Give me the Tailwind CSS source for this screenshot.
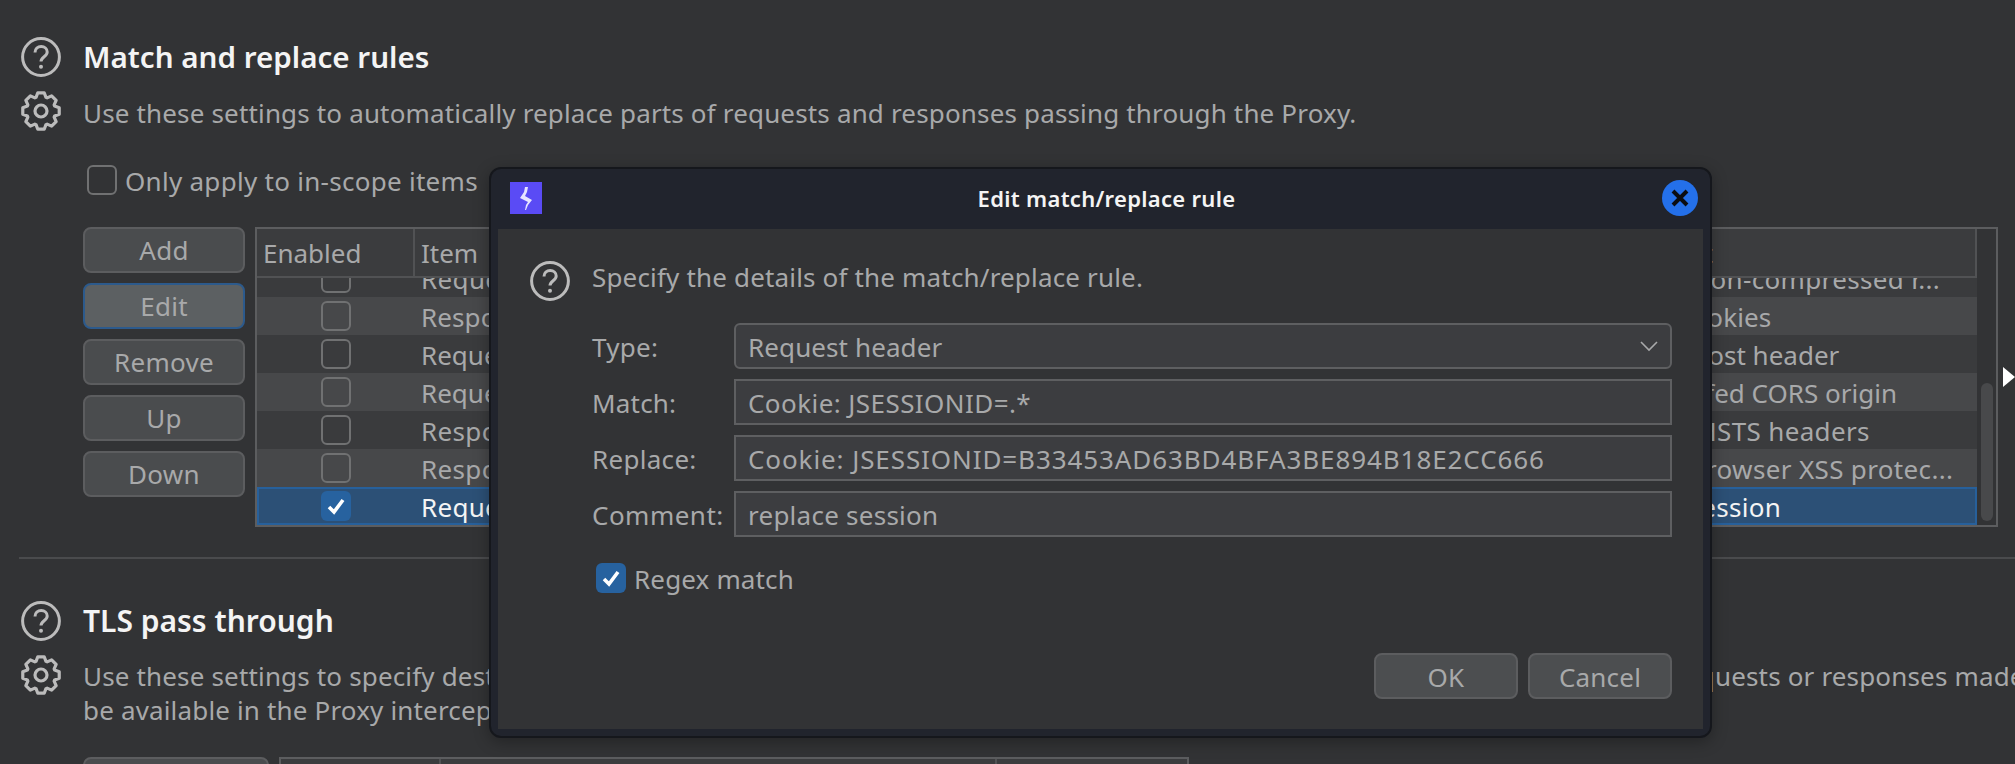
<!DOCTYPE html>
<html lang="en">
<head>
<meta charset="UTF-8">
<title>Match and replace rules</title>
<script src="https://cdn.jsdelivr.net/npm/@tailwindcss/browser@4"></script>
</head>
<body class="bg-[#323335] font-['Noto_Sans',sans-serif] text-[#a8a9aa] text-[26px] leading-[34px]">
<svg class="hidden">
	<symbol id="help" viewBox="0 0 40 40">
		<circle cx="20" cy="20" r="18.4" fill="none" stroke="#bcbcbc" stroke-width="3"/>
		<path d="M14 15.5c0-3.6 2.8-6 6.2-6s6 2.2 6 5.4c0 4.8-6.2 4.8-6.2 9.6" fill="none" stroke="#bcbcbc" stroke-width="3"/>
		<circle cx="20" cy="29.8" r="2" fill="#bcbcbc"/>
	</symbol>
	<symbol id="gear" viewBox="-21 -21 42 42">
		<polygon points="-4.96,-13.63 -3.21,-18.22 3.21,-18.22 4.96,-13.63 6.13,-13.14 10.61,-15.15 15.15,-10.61 13.14,-6.13 13.63,-4.96 18.22,-3.21 18.22,3.21 13.63,4.96 13.14,6.13 15.15,10.61 10.61,15.15 6.13,13.14 4.96,13.63 3.21,18.22 -3.21,18.22 -4.96,13.63 -6.13,13.14 -10.61,15.15 -15.15,10.61 -13.14,6.13 -13.63,4.96 -18.22,3.21 -18.22,-3.21 -13.63,-4.96 -13.14,-6.13 -15.15,-10.61 -10.61,-15.15 -6.13,-13.14" fill="none" stroke="#bcbcbc" stroke-width="3.2" stroke-linejoin="round"/>
		<circle r="6" fill="none" stroke="#bcbcbc" stroke-width="3.2"/>
	</symbol>
	<symbol id="tick" viewBox="0 0 30 30">
		<path d="M8 16l5 5 9-12" fill="none" stroke="#fff" stroke-width="3.6"/>
	</symbol>
</svg>

<div class="relative h-[764px] w-[2015px] overflow-hidden pt-[37px]">

	<!-- match and replace section -->
	<section class="h-[520px]">
		<div class="flex items-center h-10 pl-[21px] gap-[22px]">
			<svg class="w-10 h-10"><use href="#help"/></svg>
			<h2 class="text-[29.6px] font-semibold text-[#f4f4f4]">Match and replace rules</h2>
		</div>
		<div class="flex items-center h-[42px] mt-[13px] pl-5 gap-[21px]">
			<svg class="w-[42px] h-[42px]"><use href="#gear"/></svg>
			<p class="pt-[3px] tracking-[0.16px]">Use these settings to automatically replace parts of requests and responses passing through the Proxy.</p>
		</div>
		<label class="flex items-center h-[30px] mt-[33px] ml-[87px] gap-2">
			<span class="w-[30px] h-[30px] rounded-md border-2 border-[#707172]"></span>
			<span class="pt-[2px] tracking-[0.28px]">Only apply to in-scope items</span>
		</label>
		<div class="flex mt-[32px] ml-[83px] gap-[10px]">
			<div class="flex flex-col gap-[10px] w-[162px] text-center tracking-[0.3px]">
				<button class="h-[46px] rounded-lg border-2 border-[#5c5d5f] bg-[#4a4c4e]">Add</button>
				<button class="h-[46px] rounded-lg border-2 border-[#2c5a8c] bg-[#5c6062]">Edit</button>
				<button class="h-[46px] rounded-lg border-2 border-[#5c5d5f] bg-[#4a4c4e]">Remove</button>
				<button class="h-[46px] rounded-lg border-2 border-[#5c5d5f] bg-[#4a4c4e]">Up</button>
				<button class="h-[46px] rounded-lg border-2 border-[#5c5d5f] bg-[#4a4c4e]">Down</button>
			</div>
			<div class="flex w-[1743px] h-[300px] border-2 border-[#5c5d5f]">
				<div class="flex flex-col w-[1720px] h-full">
					<div class="flex h-[49px] shrink-0 bg-[#3b3c3e] border-b-2 border-[#515254] leading-[48px]">
						<div class="w-[158px] pl-[6px] border-r-2 border-[#515254]">Enabled</div>
						<div class="w-[1165px] pl-[6px]">Item</div>
						<div class="flex-1 pl-3 border-r-2 border-[#515254]">Comment</div>
					</div>
					<div class="flex flex-col justify-end flex-1 overflow-hidden">
						<div class="flex items-center h-[38px] shrink-0 bg-[#3a3b3d] tracking-[0.35px]"><span class="ml-[64px] w-[30px] h-[30px] rounded-md border-2 border-[#707172]"></span><span class="pt-[2px] ml-[70px] w-[1169px]">Request header</span><span class="pt-[2px] whitespace-nowrap">Require non-compressed r...</span></div>
						<div class="flex items-center h-[38px] shrink-0 bg-[#47484a] tracking-[0.1px]"><span class="ml-[64px] w-[30px] h-[30px] rounded-md border-2 border-[#707172]"></span><span class="pt-[2px] ml-[70px] w-[1169px]">Response header</span><span class="pt-[2px] whitespace-nowrap">Ignore cookies</span></div>
						<div class="flex items-center h-[38px] shrink-0 bg-[#3a3b3d]"><span class="ml-[64px] w-[30px] h-[30px] rounded-md border-2 border-[#707172]"></span><span class="pt-[2px] ml-[70px] w-[1169px]">Request header</span><span class="pt-[2px] whitespace-nowrap">Rewrite Host header</span></div>
						<div class="flex items-center h-[38px] shrink-0 bg-[#47484a]"><span class="ml-[64px] w-[30px] h-[30px] rounded-md border-2 border-[#707172]"></span><span class="pt-[2px] ml-[70px] w-[1169px]">Request header</span><span class="pt-[2px] whitespace-nowrap">Add spoofed CORS origin</span></div>
						<div class="flex items-center h-[38px] shrink-0 bg-[#3a3b3d] tracking-[0.35px]"><span class="ml-[64px] w-[30px] h-[30px] rounded-md border-2 border-[#707172]"></span><span class="pt-[2px] ml-[70px] w-[1169px]">Response header</span><span class="pt-[2px] whitespace-nowrap">Remove HSTS headers</span></div>
						<div class="flex items-center h-[38px] shrink-0 bg-[#47484a] tracking-[0.35px]"><span class="ml-[64px] w-[30px] h-[30px] rounded-md border-2 border-[#707172]"></span><span class="pt-[2px] ml-[70px] w-[1169px]">Response header</span><span class="pt-[2px] whitespace-nowrap">Disable browser XSS protec...</span></div>
						<div class="flex items-center h-[38px] shrink-0 bg-[#2c5076] border-2 border-[#27609b] text-[#f4f4f4] tracking-[0.3px]"><span class="ml-[62px] w-[30px] h-[30px] rounded-md bg-[#27629f]"><svg class="w-[30px] h-[30px]"><use href="#tick"/></svg></span><span class="pt-[2px] ml-[70px] w-[1169px]">Request header</span><span class="pt-[2px] whitespace-nowrap">replace session</span></div>
					</div>
				</div>
				<div class="relative flex-1 bg-[#323335]">
					<div class="absolute left-[4px] top-[154px] w-3 h-[138px] rounded-md bg-[#48494b]"></div>
				</div>
			</div>
		</div>
	</section>

	<hr class="ml-[19px] border-t-2 border-[#4a4b4d]">

	<!-- tls section -->
	<section class="mt-[42px]">
		<div class="flex items-center h-10 pl-[21px] gap-[22px]">
			<svg class="w-10 h-10"><use href="#help"/></svg>
			<h2 class="text-[30px] font-semibold text-[#f4f4f4]">TLS pass through</h2>
		</div>
		<div class="flex mt-[13px] pl-5 gap-[21px]">
			<svg class="w-[42px] h-[42px] shrink-0"><use href="#gear"/></svg>
			<p class="pt-[5px] -mb-[5px] whitespace-nowrap tracking-[0.16px]">Use these settings to specify destination web servers for which Burp will directly pass through TLS connections. No details about requests or responses made within these connections will<br>be available in the Proxy intercept view and history.</p>
		</div>
		<div class="flex mt-[35px] ml-[83px] gap-[10px]">
			<div class="w-[186px] h-[46px] rounded-lg border-2 border-[#5c5d5f] bg-[#4a4c4e]"></div>
			<div class="flex w-[910px] h-[46px] border-2 border-[#5c5d5f] bg-[#3b3c3e]">
				<div class="w-[160px] border-r-2 border-[#515254]"></div>
				<div class="w-[556px] border-r-2 border-[#515254]"></div>
			</div>
		</div>
	</section>

	<!-- arrow at the window edge -->
	<div class="absolute left-[2003px] top-[367px] w-0 h-0 border-y-[10px] border-y-transparent border-l-[12px] border-l-white"></div>

	<!-- dialog -->
	<div class="absolute left-[489px] top-[167px] flex flex-col w-[1223px] h-[571px] rounded-xl border-2 border-[#15171c] bg-[#21242d] shadow-[0_4px_16px_rgba(0,0,0,0.3)] overflow-hidden">
		<div class="relative flex items-center justify-center h-[60px] shrink-0">
			<svg class="absolute left-[19px] top-[13px] w-8 h-8" viewBox="0 0 32 32">
				<rect width="32" height="32" fill="#5a4bf5"/>
				<path d="M15 5h3l-1 5-2 4 7 4-4 5-2 5h-1l1-5 2-3-8-4 4-6z" fill="#e6e3ff"/>
			</svg>
			<h1 class="pl-3 -mt-[2px] text-[22px] tracking-[0.3px] font-semibold text-[#f4f4f4]">Edit match/replace rule</h1>
			<button class="absolute left-[1171px] top-[11px] flex items-center justify-center w-9 h-9 rounded-full bg-[#2470ea]">
				<svg class="w-[18px] h-[18px]" viewBox="0 0 18 18"><path d="M2 2l14 14M16 2L2 16" stroke="#0b0d12" stroke-width="4"/></svg>
			</button>
		</div>
		<div class="flex-1 mx-[7px] mb-[7px] bg-[#323335] pt-[32px]">
			<div class="flex items-center h-10 pl-[32px] gap-[22px]">
				<svg class="w-10 h-10"><use href="#help"/></svg>
				<p class="-mt-[8px] tracking-[0.17px]">Specify the details of the match/replace rule.</p>
			</div>
			<div class="grid grid-cols-[142px_938px] gap-y-[10px] ml-[94px] mt-[22px] items-center">
				<span class="pt-[2px] tracking-[0.3px]">Type:</span>
				<div class="flex items-center justify-between h-[46px] rounded-md border-2 border-[#5e5f61] bg-[#3c3d40] pl-3 pr-[11px]"><span class="pt-[2px] tracking-[0.1px]">Request header</span>
					<svg class="w-5 h-5" viewBox="0 0 20 20"><path d="M2 6l8 8 8-8" fill="none" stroke="#a8a9aa" stroke-width="1.6"/></svg>
				</div>
				<span class="pt-[2px] tracking-[0.2px]">Match:</span>
				<div class="flex items-center h-[46px] border-2 border-[#5e5f61] bg-[#3c3d40] pl-3"><span class="pt-[2px] tracking-[0.43px]">Cookie: JSESSIONID=.*</span></div>
				<span class="pt-[2px] tracking-[0.3px]">Replace:</span>
				<div class="flex items-center h-[46px] border-2 border-[#5e5f61] bg-[#3c3d40] pl-3"><span class="pt-[2px] tracking-[0.91px]">Cookie: JSESSIONID=B33453AD63BD4BFA3BE894B18E2CC666</span></div>
				<span class="pt-[2px] tracking-[0.48px]">Comment:</span>
				<div class="flex items-center h-[46px] border-2 border-[#5e5f61] bg-[#3c3d40] pl-3"><span class="pt-[2px] tracking-[0.25px]">replace session</span></div>
			</div>
			<label class="flex items-center h-[30px] ml-[98px] mt-[26px] gap-2">
				<span class="w-[30px] h-[30px] rounded-md bg-[#27629f]"><svg class="w-[30px] h-[30px]"><use href="#tick"/></svg></span>
				<span class="pt-[2px] tracking-[0.15px]">Regex match</span>
			</label>
			<div class="flex justify-end gap-[10px] mr-[31px] mt-[60px] tracking-[0.2px]">
				<button class="w-[144px] h-[46px] pt-[2px] rounded-lg border-2 border-[#5c5d5f] bg-[#4c4e50]">OK</button>
				<button class="w-[144px] h-[46px] pt-[2px] rounded-lg border-2 border-[#5c5d5f] bg-[#4c4e50]">Cancel</button>
			</div>
		</div>
	</div>
</div>
</body>
</html>
